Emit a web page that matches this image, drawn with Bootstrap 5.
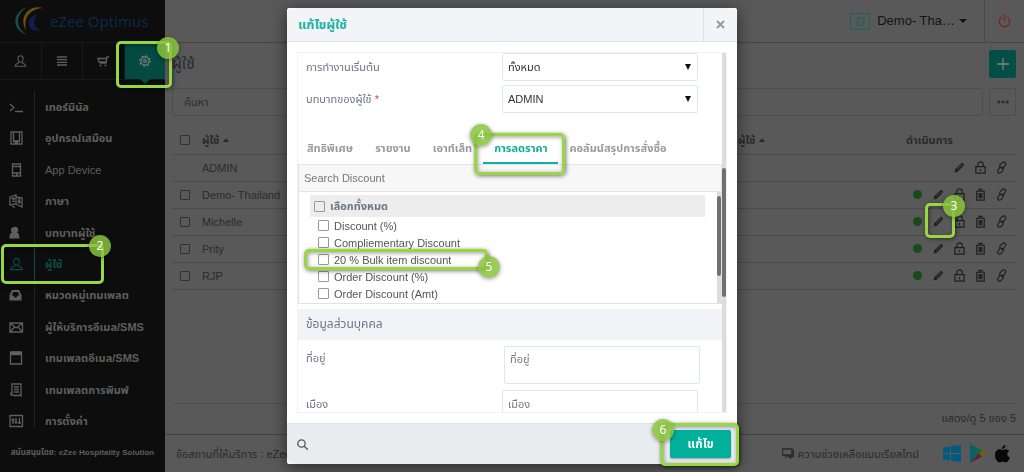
<!DOCTYPE html>
<html lang="th">
<head>
<meta charset="utf-8">
<meta name="viewport" content="width=device-width, initial-scale=1">
<title>eZee Optimus</title>
<link href="https://cdn.jsdelivr.net/npm/bootstrap@5.3.0/dist/css/bootstrap.min.css" rel="stylesheet">
<style>
body{font-family:"Liberation Sans","Noto Sans Thai",sans-serif;font-size:11px;line-height:16px;background:#595959;color:#2a2a2a;overflow:hidden}
a{text-decoration:none;color:inherit}
svg{flex:none;display:block}
.ln{fill:none;stroke:currentColor;stroke-width:1.3}
.shell{height:100vh}
/* sidebar */
.side{width:165px;background:#0d0d0d;color:#5e5e5e;z-index:3}
.brand-row{height:42px;padding-left:14px;gap:5px}
.brand-name{font:15px/20px "Noto Sans",sans-serif;color:#0b2a49}
.quick{height:38px;border-top:1px solid #191919;border-bottom:1px solid #191919;margin-bottom:11px}
.quick a+a{border-left:1px solid #191919}
.quick .on{background:#034a41;color:#777}
.quick .on::after{content:"";position:absolute;top:100%;left:50%;margin-left:-5px;border:5px solid transparent;border-top-color:#034a41;border-bottom:0}
.menu::before{content:"";position:absolute;left:34px;top:0;bottom:10px;border-left:1px solid #222}
.menu a{gap:10px;padding-left:9px}
.menu a svg{width:15px;height:14px}
.menu a b,.menu a .latin{padding-left:10px;border-left:1px solid transparent}
.menu .on{color:#044f46}
.menu .on b{border-color:#044f46}
.side-foot{height:35px;font-size:8px;font-weight:bold}
/* main */
.top{height:43px;border-bottom:1px solid #454545;color:#141414;font-size:13px}
.initial{width:20px;height:17px;border:1px solid #1c6157;color:#1c6157;line-height:15px;text-align:center;margin-right:7px}
.power{width:40px;border:0;border-left:1px solid #484848;background:none;color:#7c2222;margin-left:17px}
.tri{border:4px solid transparent;border-top-color:currentColor;border-bottom:0}
.tri-up{display:inline-block;border:3px solid transparent;border-bottom:4px solid currentColor;border-top:0;vertical-align:2px}
.page{padding:7px 8px 0 7px}
.page h1{font-size:15px;line-height:28px;margin:0;color:#2b2f38}
.tools{gap:6px;margin-top:10px}
.sq{width:27px;height:28px;padding:0;border-radius:2px;border:1px solid #4d4d4d;background:none;color:#292f35}
.sq.add{background:#034f45;color:#7a8583;border:0}
.find{height:28px;border:1px solid #4d4d4d;border-radius:2px;padding:0 11px;background:none;font-size:11px;color:#333}
.find::placeholder{color:#2d2d2d}
.users{margin-top:11px;--bs-table-bg:transparent;font-size:11px}
.users>*>tr>*{color:#2b2b2b;height:27px;padding:0;border-bottom:1px solid #4b4b4b;vertical-align:middle;line-height:16px}
.tick{display:block;appearance:none;width:10px;height:10px;border:1px solid #303030;border-radius:1px;margin:0;background:none}
.acts{gap:8px;padding-right:8px}
.acts svg{width:13px;height:13px}
.acts button{border:0;background:none;padding:0;color:#1f1f1f;position:relative}
.dot-on{width:9px;height:9px;border-radius:50%;background:#194a1b;margin-right:2px}
.count{height:31px;border-top:1px solid #4d4d4d;margin:0 8px;padding-top:6px}
.foot{height:38px;border-top:1px solid #434343;padding:0 14px 0 11px}
/* dialog */
.modal{overflow:hidden}
.modal-dialog{max-width:450px;margin:8px auto;height:calc(100vh - 16px)}
.modal-content{height:100%;border:0;border-radius:2px;box-shadow:0 3px 16px rgba(0,0,0,.55)}
.modal-header{height:34px;padding:0;background:#f2f4f8;border-color:#dde3ea;align-items:stretch}
.modal-title{font-size:13px;line-height:33px;font-weight:bold;color:#1ab39f;padding-left:11px}
.close-x{width:34px;border:0;border-left:1px solid #dde3ea;background:none;color:#9a9a9a;padding:0}
.modal-body{padding:10px;min-height:0}
.pane{height:100%;border:1px solid #f3f3f3;overflow:hidden}
.lab{color:#6b7687;width:204px;padding-left:8px;flex:none}
.lab-area{width:206px}
.inp{width:196px;height:28px;padding:0 8px 0 5px;border:1px solid #dfe6ee;border-radius:2px;font-size:11px;background:#fff;color:#333}
textarea.inp{height:38px;resize:none}
.inp::placeholder{color:#777}
select.inp{appearance:none}
.pick::after{content:"";position:absolute;right:7px;top:11px;border:3px solid transparent;border-top:6px solid #111;border-bottom:0}
.tabs{height:33px;margin-top:19px;border-bottom:1px solid #dfe6ee}
.tabs .nav-link{color:#9b9b9b;font-weight:bold;padding:8px 11px;font-size:11px;line-height:16px;border-bottom:2px solid transparent;position:relative;white-space:nowrap}
.tabs .nav-link:first-child{padding-left:9px}
.tabs .nav-link.active{color:#0fae9b;border-color:#0fae9b}
.seek{width:100%;height:27px;border:1px solid #dfe3e8;border-top:0;background:#f7f7f7;padding:0 5px;font-size:11px;display:block}
.seek::placeholder{color:#777}
.options{height:112px;border:1px solid #dfe3e8;border-top:0}
.option-list{padding:3px 12px 0 11px}
.options .tick{width:11px;height:11px;border-color:#999}
.options label{gap:5px}
.options .all{background:#ededed;height:22px;padding-left:4px;font-weight:bold;color:#6b7687}
.options .opt{height:17px;padding-left:8px;color:#555}
.rail{width:4px;background:#dcdcdc;flex:none}
.thumb{background:#707070;border-radius:2px}
.sect{height:31px;line-height:31px;background:#f2f3f7;padding-left:8px;color:#6b7687;margin-top:5px;font-size:12px}
.row-gap{padding-top:6px}
.modal-footer{height:41px;padding:0 6px;background:#eaedf0;border-top:1px solid #dfe4e8;justify-content:space-between}
.save{width:61px;height:28px;padding:0;border:0;border-radius:2px;background:#00b09b;color:#fff;font-size:12px;font-weight:bold;position:relative;box-shadow:0 1px 2px #0005}
/* step markers */
.mark-box{position:absolute;border:3px solid #99d742;border-radius:5px;box-shadow:1px 1px 4px #0008,inset 1px 1px 4px #0006;z-index:5;pointer-events:none}
.mark-box i{position:absolute;width:22px;height:22px;border-radius:50%;background:rgba(137,194,61,.85);color:#fff;font:12px/22px "Noto Sans",sans-serif;text-align:center;box-shadow:0 1px 4px #0006}
.m1{inset:-2px -7px -9px -9px}.m1 i{right:-10px;top:-7px}
.m2{left:1px;right:61px;top:-4px;bottom:-4px}.m2 i{right:-10px;top:-12px}
.m3{inset:-12px -10px -10px -7px}.m3 i{right:-13px;top:-11px}
.m4{inset:1px -7px -13px -9px}.m4 i{left:-7px;top:-12px}
.m5{left:-6px;width:184px;top:-2px;bottom:-2px}.m5 i{right:-15px;top:4px}
.m6{inset:-7px -8px -8px -10px}.m6 i{left:-11px;top:-7px}
</style>
</head>
<body>
<svg class="d-none">
  <symbol id="person" viewBox="0 0 16 16"><path class="ln" d="M8 1.5c2 0 3.2 1.600 3.200 3.600C11.200 7 10 9.500 8 9.500S4.800 7 4.800 5.100C4.800 3 6 1.500 8 1.500zM6.300 9.500c-.3 1.500-4.800 1-5 5h13.400c-.2-4-4.700-3.500-5-5"/></symbol>
  <symbol id="pencil" viewBox="0 0 14 14"><path d="M1.500 12.500l1-3.500 6.500-6.500c1.200-1.200 3.700 1.200 2.500 2.500L5 11.500z" fill="currentColor"/><path d="M4.500 9l4-4M8.500 3.500l2.500 2.500" stroke="#595959" stroke-width=".8"/></symbol>
  <symbol id="lock" viewBox="0 0 14 14"><path class="ln" stroke-width="1.1" d="M2 6h10v7H2zM4 6V4c0-4 6-4 6 0v2M7 8.500v2.500"/></symbol>
  <symbol id="bin" viewBox="0 0 14 14"><path class="ln" d="M3 3.500h8V13H3zM5.500 3V1.500h3V3M5.500 5.500v5.500M7 5.500v5.500M8.500 5.500v5.500"/></symbol>
  <symbol id="chain" viewBox="0 0 14 14"><path class="ln" d="M6 7L5 5.500c-.5-1 3-4.500 4.500-4.500s2.500 1.500 2 2.500L9 7.500c-.7.8-2 .6-2.500 0M8 6.500L9 8.500c.5 1-2.500 4.500-4 4.500s-2.700-1.300-2-2.500L5 7c.8-.8 2-.6 2.500 0"/></symbol>
</svg>

<div class="shell d-flex">
  <aside class="side d-flex flex-column flex-shrink-0 position-relative">
    <div class="brand-row d-flex align-items-center">
      <svg width="31" height="30" viewBox="0 0 31 30" fill="none"><path d="M13 1C-2 6-3 24 13 29 1 21 1 9 13 1z" fill="#174c4e"/><path d="M29 2C15-2 4 11 12 25 9 11 16 3 29 2z" fill="#6b5207"/><path d="M23 8c-10 2-14 20 6 16-9 0-11-8-6-16z" fill="#111e4c"/></svg>
      <span class="brand-name">eZee Optimus</span>
    </div>
    <nav class="quick d-flex">
      <a href="#" class="col d-flex align-items-center justify-content-center" aria-label="ผู้ใช้"><svg width="13" height="14"><use href="#person"/></svg></a>
      <a href="#" class="col d-flex align-items-center justify-content-center" aria-label="รายการ"><svg width="10" height="10" viewBox="0 0 10 10"><path d="M0 1h10M0 3.700h10M0 6.400h10M0 9h10" stroke="currentColor" stroke-width="1.300"/></svg></a>
      <a href="#" class="col d-flex align-items-center justify-content-center" aria-label="ร้านค้า"><svg width="12" height="11" viewBox="0 0 12 11"><path class="ln" d="M12 1h-2L9 7H3M9 6H2L1 2.500h8"/><circle cx="3.500" cy="9.500" r="1" fill="currentColor"/><circle cx="8.500" cy="9.500" r="1" fill="currentColor"/></svg></a>
      <a href="#" class="on col d-flex align-items-center justify-content-center position-relative" aria-label="ตั้งค่า"><svg width="12" height="12" viewBox="0 0 12 12"><circle class="ln" cx="6" cy="6" r="4"/><circle class="ln" cx="6" cy="6" r="1.400"/><circle cx="6" cy="6" r="5.200" fill="none" stroke="currentColor" stroke-width="1.400" stroke-dasharray="1.800 2.284"/></svg><span class="mark-box m1"><i>1</i></span></a>
    </nav>
    <nav class="menu flex-fill d-flex flex-column position-relative">
      <a href="#" class="flex-fill d-flex align-items-center"><svg viewBox="0 0 15 14"><path class="ln" d="M1 4l4 3.500L1 11M6 11.500h8"/></svg><b class="align-self-stretch d-flex align-items-center">เทอร์มินัล</b></a>
      <a href="#" class="flex-fill d-flex align-items-center"><svg viewBox="0 0 15 14"><path class="ln" d="M2 1h11v12H2zM4.500 2v8h6V2M4 10.500h7M6 11.700h3"/></svg><b class="align-self-stretch d-flex align-items-center">อุปกรณ์เสมือน</b></a>
      <a href="#" class="flex-fill d-flex align-items-center"><svg viewBox="0 0 15 14"><path class="ln" d="M3.500 1h8v12h-8zM3.500 3.500h8M3.500 10h8M7 11.500h1.500"/></svg><span class="latin align-self-stretch d-flex align-items-center">App Device</span></a>
      <a href="#" class="flex-fill d-flex align-items-center"><svg viewBox="0 0 15 14"><path class="ln" d="M1 3l6-2v9l-6 1zM7 3l6 1v9l-6-3M9 9l1-4 1.500 4.500M9.500 8h2M2.500 4.500l3-.5-2 4M4 5l1.500 3M3 12l3 1.500"/></svg><b class="align-self-stretch d-flex align-items-center">ภาษา</b></a>
      <a href="#" class="flex-fill d-flex align-items-center"><svg viewBox="0 0 15 14"><path fill="currentColor" d="M5 1c5-1 5 4 3 6 2 0 2 1 2.500 5.500h-10C.500 8 1 7 3 7 1 4 2 1.500 5 1z"/></svg><b class="align-self-stretch d-flex align-items-center">บทบาทผู้ใช้</b></a>
      <a href="#" class="on flex-fill d-flex align-items-center position-relative"><svg><use href="#person"/></svg><b class="align-self-stretch d-flex align-items-center">ผู้ใช้</b><span class="mark-box m2"><i>2</i></span></a>
      <a href="#" class="flex-fill d-flex align-items-center"><svg viewBox="0 0 15 14"><path fill="currentColor" fill-rule="evenodd" d="M3 2h7l2.500 5v5.500H0.500V7zM4.200 4L2.700 7.500H4.500l1 2h2l1-2h1.800L8.800 4z"/></svg><b class="align-self-stretch d-flex align-items-center">หมวดหมู่เทมเพลต</b></a>
      <a href="#" class="flex-fill d-flex align-items-center"><svg viewBox="0 0 15 14"><path class="ln" d="M1 3h12.500v9H1zM1 3l6.200 5 6.300-5M1 12l4.500-5M13.500 12L9 7"/></svg><b class="align-self-stretch d-flex align-items-center">ผู้ให้บริการอีเมล/SMS</b></a>
      <a href="#" class="flex-fill d-flex align-items-center"><svg viewBox="0 0 15 14"><path class="ln" d="M1.500 1h11v12h-11zM1.500 3.500h11M1.500 2.500h11M4.500 0v3M7 0v3M9.500 0v3"/></svg><b class="align-self-stretch d-flex align-items-center">เทมเพลตอีเมล/SMS</b></a>
      <a href="#" class="flex-fill d-flex align-items-center"><svg viewBox="0 0 15 14"><path class="ln" d="M3 1h9v12l-1.500-1L9 13l-1.500-1L6 13l-1.500-1H2v-2h1zM5 4h5M5 6.500h5M5 9h5"/></svg><b class="align-self-stretch d-flex align-items-center">เทมเพลตการพิมพ์</b></a>
      <a href="#" class="flex-fill d-flex align-items-center"><svg viewBox="0 0 15 14"><path class="ln" d="M1 1.500h12.500v11H1zM4 4v6M7 4v6M10.500 4v6M2.500 6h3M5.500 8h3M9 9h3"/></svg><b class="align-self-stretch d-flex align-items-center">การตั้งค่า</b></a>
    </nav>
    <div class="side-foot text-center pt-2">สนับสนุนโดย: eZee Hospitality Solution</div>
  </aside>

  <main class="flex-fill d-flex flex-column">
    <header class="top d-flex justify-content-end align-items-stretch">
      <a href="#" class="d-flex align-items-center"><span class="initial">D</span>Demo- Tha…<span class="tri ms-1"></span></a>
      <button class="power d-flex align-items-center justify-content-center" aria-label="ออก"><svg width="13" height="14" viewBox="0 0 13 14"><path class="ln" d="M4 3a5.200 5.200 0 1 0 5 0M6.500 0v7"/></svg></button>
    </header>
    <section class="page">
      <div class="d-flex justify-content-between"><h1>ผู้ใช้</h1><button class="sq add d-flex align-items-center justify-content-center" aria-label="เพิ่ม"><svg width="12" height="12" viewBox="0 0 12 12"><path class="ln" d="M6 0v12M0 6h12"/></svg></button></div>
      <div class="tools d-flex"><input class="find flex-fill" placeholder="ค้นหา" aria-label="ค้นหา"><button class="sq d-flex align-items-center justify-content-center" aria-label="เพิ่มเติม"><svg width="12" height="4" viewBox="0 0 12 4" fill="currentColor"><circle cx="1.800" cy="2" r="1.600"/><circle cx="6" cy="2" r="1.600"/><circle cx="10.200" cy="2" r="1.600"/></svg></button></div>
      <table class="users table mb-0">
        <colgroup><col style="width:30px"><col><col style="width:168px"><col style="width:110px"></colgroup>
        <thead><tr><th class="ps-2"><input type="checkbox" class="tick" aria-label="เลือกทั้งหมด"></th><th>ผู้ใช้ <span class="tri-up"></span></th><th>ผู้ใช้ <span class="tri-up"></span></th><th>ดำเนินการ</th></tr></thead>
        <tbody id="rows"></tbody>
      </table>
    </section>
    <div class="count mt-auto text-end">แสดง/ดู 5 ของ 5</div>
    <footer class="foot d-flex align-items-center">
      <span class="me-auto">ข้อสถานที่ให้บริการ : eZee</span>
      <a href="#" class="d-flex align-items-center gap-1"><svg width="12" height="11" viewBox="0 0 12 11"><path class="ln" stroke-width="1" d="M.5 1h9.500v6H6L4 9V7H.5zM10 2.500h1.500v6H10L8.500 10V8.500H6"/></svg>ความช่วยเหลือแบบเรียลไทม์</a>
      <svg class="ms-4" width="18" height="17" viewBox="0 0 18 17" fill="#035a7c"><path d="M0 2.500L7 1.500V8H0zM8 1.300L18 0v8H8zM0 9h7v6.500L0 14.500zM8 9h10v8L8 15.700z"/></svg>
      <svg class="ms-2 me-2" width="18" height="19" viewBox="0 0 18 19"><path d="M1 0v19l9-9.500z" fill="#07606a"/><path d="M1 0l12 6.500-3 3z" fill="#0b6a3c"/><path d="M1 19l12-6.500-3-3z" fill="#6e1a22"/><path d="M13 6.500l5 3-5 3-3-3z" fill="#735c0b"/></svg>
      <svg width="15" height="18" viewBox="0 0 15 18"><path d="M10.500 0c.2 2-1.500 4-3.500 4C6.800 2 8.500.300 10.500 0zM7.500 5c1 0 2-.8 3.500-.8 1.300 0 2.500.7 3.200 1.800-2.800 1.700-2.300 5.400.6 6.500-.8 2.400-2.300 5-4 5-1 0-1.600-.7-3-.7s-2 .7-3 .7C2.200 17.500 0 13.500 0 10c0-3.500 2.200-5.700 4.500-5.700C5.800 4.300 6.700 5 7.500 5z" fill="#080808"/></svg>
    </footer>
  </main>
</div>

<div class="modal d-block" tabindex="-1" role="dialog" aria-labelledby="dlg">
  <div class="modal-dialog">
    <div class="modal-content">
      <div class="modal-header"><h2 class="modal-title mb-0" id="dlg">แก้ไขผู้ใช้</h2><button class="close-x d-flex align-items-center justify-content-center" aria-label="ปิด"><svg width="9" height="9" viewBox="0 0 9 9"><path d="M1 1l7 7M8 1L1 8" stroke="currentColor" stroke-width="2"/></svg></button></div>
      <div class="modal-body">
        <div class="pane d-flex">
          <form class="flex-fill">
            <div class="d-flex align-items-center mt-0 pt-0 mb-1"><label class="lab" for="f1">การทำงานเริ่มต้น</label><span class="pick position-relative"><select class="inp" id="f1"><option>ทั้งหมด</option></select></span></div>
            <div class="d-flex align-items-center"><label class="lab" for="f2">บทบาทของผู้ใช้ <span class="text-danger">*</span></label><span class="pick position-relative"><select class="inp" id="f2"><option>ADMIN</option></select></span></div>
            <nav class="tabs nav flex-nowrap">
              <a class="nav-link" href="#">สิทธิพิเศษ</a><a class="nav-link" href="#">รายงาน</a><a class="nav-link" href="#">เอาท์เล็ท</a><a class="nav-link active" href="#">การลดราคา<span class="mark-box m4"><i>4</i></span></a><a class="nav-link" href="#">คอลัมน์สรุปการสั่งซื้อ</a>
            </nav>
            <input class="seek" placeholder="Search Discount" aria-label="Search Discount">
            <div class="options d-flex">
              <div class="option-list flex-fill">
                <label class="all d-flex align-items-center"><input class="tick" type="checkbox">เลือกทั้งหมด</label>
                <label class="opt d-flex align-items-center"><input class="tick" type="checkbox">Discount (%)</label>
                <label class="opt d-flex align-items-center"><input class="tick" type="checkbox">Compliementary Discount</label>
                <label class="opt d-flex align-items-center position-relative"><input class="tick" type="checkbox">20 % Bulk item discount<span class="mark-box m5"><i>5</i></span></label>
                <label class="opt d-flex align-items-center"><input class="tick" type="checkbox">Order Discount (%)</label>
                <label class="opt d-flex align-items-center"><input class="tick" type="checkbox">Order Discount (Amt)</label>
              </div>
              <div class="rail pt-1"><div class="thumb h-75"></div></div>
            </div>
            <div class="sect">ข้อมูลส่วนบุคคล</div>
            <div class="row-gap d-flex"><label class="lab lab-area pt-1" for="f3">ที่อยู่</label><textarea class="inp pt-1" id="f3" placeholder="ที่อยู่"></textarea></div>
            <div class="row-gap d-flex align-items-center"><label class="lab" for="f4">เมือง</label><input class="inp" id="f4" placeholder="เมือง"></div>
          </form>
          <div class="rail d-flex flex-column"><div style="height:32%"></div><div class="thumb" style="height:36%"></div></div>
        </div>
      </div>
      <div class="modal-footer"><svg width="11" height="11" viewBox="0 0 11 11" style="color:#555"><circle class="ln" cx="4.500" cy="4.500" r="3.700"/><path class="ln" d="M7 7l4 4"/></svg><button class="save m-0">แก้ไข<span class="mark-box m6"><i>6</i></span></button></div>
    </div>
  </div>
</div>
<script src="https://cdn.jsdelivr.net/npm/bootstrap@5.3.0/dist/js/bootstrap.bundle.min.js"></script>
<script>
const act = (id, name, extra = '') => `<button aria-label="${name}"><svg><use href="#${id}"/></svg>${extra}</button>`;
document.getElementById('rows').innerHTML = ['ADMIN', 'Demo- Thailand', 'Michelle', 'Prity', 'RJP'].map((n, i) => `<tr>
<td class="ps-2">${i ? `<input type="checkbox" class="tick" aria-label="${n}">` : ''}</td><td>${n}</td><td></td>
<td><div class="acts d-flex justify-content-end align-items-center">${i ? '<span class="dot-on"></span>' : ''}${act('pencil', 'แก้ไข', n === 'Michelle' ? '<span class="mark-box m3"><i>3</i></span>' : '')}${act('lock', 'ล็อก')}${i ? act('bin', 'ลบ') : ''}${act('chain', 'ลิงก์')}</div></td></tr>`).join('');
</script>
</body>
</html>
